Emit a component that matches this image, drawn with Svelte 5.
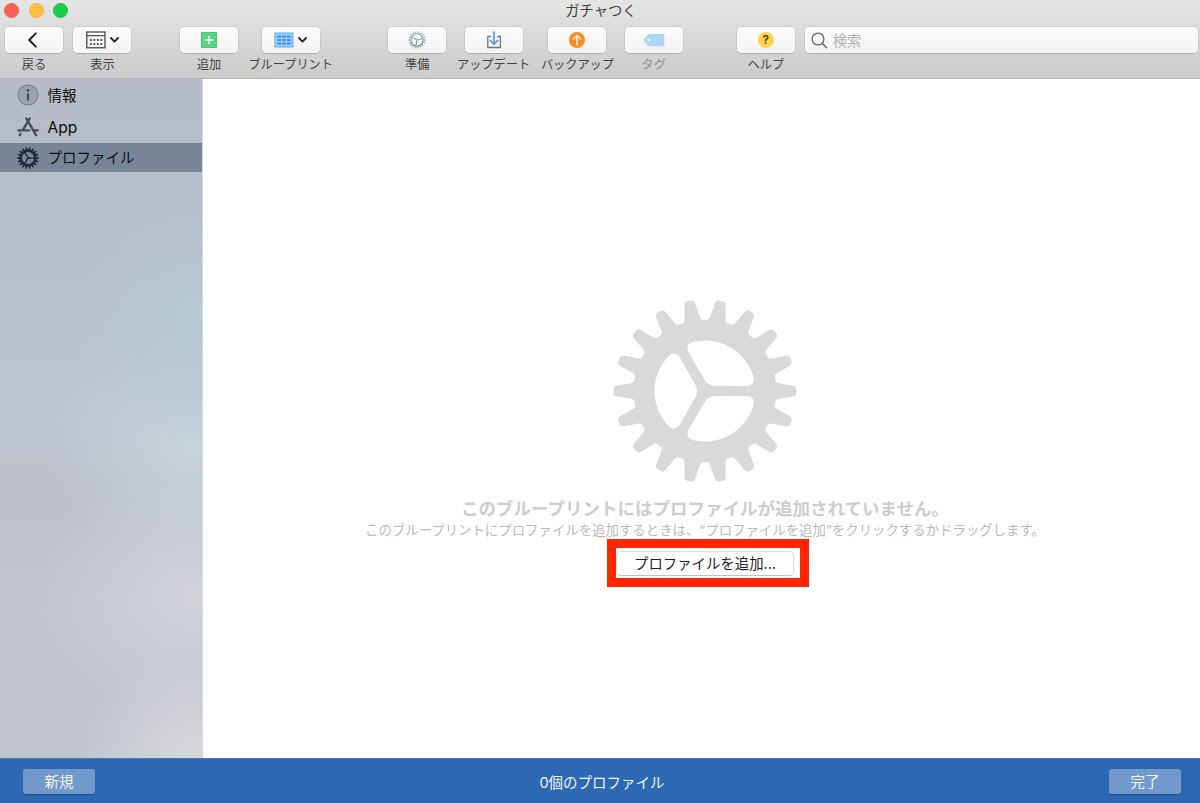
<script>
  const leftItems = [
    { icon: 'back', label: '戻る' },
    { icon: 'view', label: '表示' }
  ];
  const addItems = [
    { icon: 'add', label: '追加' },
    { icon: 'blueprint', label: 'ブループリント' }
  ];
  const deviceItems = [
    { icon: 'prepare', label: '準備' },
    { icon: 'update', label: 'アップデート' },
    { icon: 'backup', label: 'バックアップ' },
    { icon: 'tag', label: 'タグ', disabled: true }
  ];
  const helpItems = [{ icon: 'help', label: 'ヘルプ' }];

  const groups = [
    { name: 'nav', items: leftItems },
    { name: 'add', items: addItems },
    { name: 'device', items: deviceItems },
    { name: 'help', items: helpItems }
  ];

  const sections = [
    { id: 'info', label: '情報' },
    { id: 'app', label: 'App' },
    { id: 'profile', label: 'プロファイル' }
  ];

  let selected = $state('profile');

  const TEETH = 18;

  // returns a function that formats a point turned by a radians
  function turned(a) {
    return (x, y) =>
      `${(x * Math.cos(a) - y * Math.sin(a)).toFixed(2)} ${(x * Math.sin(a) + y * Math.cos(a)).toFixed(2)}`;
  }

  // one tooth lying on the x axis, repeated around the centre
  function gearOutline() {
    let d = '';
    for (let i = 0; i < TEETH; i++) {
      const p = turned((i * 2 * Math.PI) / TEETH);
      d += `${i === 0 ? 'M' : 'L'}${p(70.8, -9.4)}Q${p(71.5, -8.2)} ${p(75, -7.6)}L${p(87.6, -5.5)}`;
      d += `Q${p(91.3, -5)} ${p(91.5, -2)}L${p(91.5, 2)}Q${p(91.3, 5)} ${p(87.6, 5.5)}`;
      d += `L${p(75, 7.6)}Q${p(71.5, 8.2)} ${p(70.8, 9.4)}`;
    }
    return d + 'Z';
  }

  // the three openings between the spokes
  function gearHoles() {
    let d = '';
    for (let i = 0; i < 3; i++) {
      const p = turned(((60 + i * 120) * Math.PI) / 180);
      d += `M${p(25.3, -33.7)}L${p(9.8, -6.5)}Q${p(5.7, 0)} ${p(9.8, 6.5)}L${p(25.3, 33.7)}`;
      d += `Q${p(30.8, 41)} ${p(37, 34.3)}A50.4 50.4 0 0 0 ${p(37, -34.3)}Q${p(30.8, -41)} ${p(25.3, -33.7)}Z`;
    }
    return d;
  }

  const gear = gearOutline() + gearHoles();
  const ticks = Array.from({ length: 18 }, (_, i) => i * 20);
</script>

{#snippet chevron()}
  <svg class="chevron" width="9" height="6" viewBox="0 0 9 6">
    <path d="M1 1l3.5 3.6L8 1" fill="none" stroke="#222" stroke-width="1.8" stroke-linecap="round" stroke-linejoin="round" />
  </svg>
{/snippet}

{#snippet toolIcon(name)}
  {#if name === 'back'}
    <svg class="back" width="18" height="18" viewBox="0 0 18 18">
      <path d="M11.8 2.4L5.3 9l6.5 6.6" fill="none" stroke="#222" stroke-width="2" stroke-linecap="round" stroke-linejoin="round" />
    </svg>
  {:else if name === 'view'}
    <svg width="20" height="18" viewBox="0 0 20 18">
      <rect x="0.8" y="1" width="18.2" height="15.8" fill="none" stroke="#3c3c3c" stroke-width="1.2" />
      <path d="M1 4.7h18" stroke="#3c3c3c" stroke-width="1.1" />
      <path d="M3.9 9h12.4M3.9 13h12.4" stroke="#555" stroke-width="2" stroke-dasharray="1.9 1.6" />
    </svg>
    {@render chevron()}
  {:else if name === 'add'}
    <svg width="16" height="16" viewBox="0 0 16 16">
      <rect width="16" height="16" rx="0.6" fill="#56d480" />
      <rect x="0.5" y="0.5" width="15" height="15" fill="none" stroke="#4cc977" />
      <path d="M8 3.8v8.4M3.8 8h8.4" stroke="#fff" stroke-width="1.3" />
    </svg>
  {:else if name === 'blueprint'}
    <svg width="20" height="16" viewBox="0 0 20 16">
      <rect x="0.5" y="0.6" width="18.8" height="14.8" fill="#a3d0fc" />
      <rect x="1" y="1.1" width="17.8" height="13.8" fill="none" stroke="#5cacf9" />
      <path d="M3.2 4.6h13.6M3.2 8.1h13.6M3.2 11.6h13.6" stroke="#3f97f5" stroke-width="2.3" stroke-dasharray="3.9 0.95" />
    </svg>
    {@render chevron()}
  {:else if name === 'prepare'}
    <svg width="18" height="18" viewBox="-9 -9 18 18">
      <defs>
        <linearGradient id="steel" gradientUnits="userSpaceOnUse" x1="0" y1="-8" x2="0" y2="8">
          <stop offset="0" stop-color="#a4cdd8" />
          <stop offset="1" stop-color="#7d8388" />
        </linearGradient>
      </defs>
      <g fill="none" stroke="url(#steel)">
        <circle r="6.1" stroke-width="1.3" />
        {#each ticks as angle}
          <path d="M6.6 -0.01L8.5 0.01" transform="rotate({angle})" stroke-width="1.3" />
        {/each}
        <path d="M0 0L-5.4 -2.9M0 0L5.7 -1.4M0 0L-1.2 6" stroke-width="1.2" />
      </g>
    </svg>
  {:else if name === 'update'}
    <svg width="16" height="18" viewBox="0 0 16 18">
      <path d="M5 5.5H1.8v11h12.6v-11H11" fill="none" stroke="#757575" stroke-width="1.3" />
      <path d="M8 1v12.2M4.1 9.3L8 13.3l3.9-4" fill="none" stroke="#3f97f5" stroke-width="1.6" stroke-linecap="round" stroke-linejoin="round" />
    </svg>
  {:else if name === 'backup'}
    <svg width="16" height="16" viewBox="0 0 16 16">
      <circle cx="8" cy="8" r="8" fill="#fd8d1f" />
      <path d="M8 13V3.5M4.5 7L8 3.4 11.5 7" fill="none" stroke="#fff" stroke-width="1.3" stroke-linecap="round" stroke-linejoin="round" />
    </svg>
  {:else if name === 'tag'}
    <svg width="22" height="14" viewBox="0 0 22 14">
      <path fill-rule="evenodd" fill="#b0d4f8" d="M6 1h14.4q0.8 0 0.8 0.8v10.6q0 0.8-0.8 0.8H6Q5.3 13.2 4.7 12.4L1 8.1q-0.7-1 0-2L4.7 1.8Q5.3 1 6 1zM5.8 5.8a1.3 1.3 0 1 0 0 2.6a1.3 1.3 0 1 0 0-2.6z" />
    </svg>
  {:else if name === 'help'}
    <span class="help-mark">?</span>
  {/if}
{/snippet}

<div class="window">
  <header>
    <div class="titlebar">
      <div class="lights">
        <span class="light close"></span>
        <span class="light minimize"></span>
        <span class="light zoom"></span>
      </div>
      <div class="title">ガチャつく</div>
    </div>
    <div class="toolbar">
      {#each groups as group}
        <div class="group {group.name}">
          {#each group.items as item}
            <div class="tool" class:disabled={item.disabled}>
              <button class="tool-button" aria-label={item.label} disabled={item.disabled}>
                {@render toolIcon(item.icon)}
              </button>
              <span class="tool-label">{item.label}</span>
            </div>
          {/each}
        </div>
      {/each}
      <label class="search">
        <svg width="17" height="17" viewBox="0 0 17 17">
          <circle cx="7" cy="7" r="5.9" fill="none" stroke="#666" stroke-width="1.3" />
          <path d="M11.2 11.2l4.4 4.5" stroke="#666" stroke-width="1.5" stroke-linecap="round" />
        </svg>
        <input type="text" placeholder="検索" />
      </label>
    </div>
  </header>

  <div class="body">
    <nav>
      {#each sections as section}
        <button class="row" class:selected={selected === section.id} onclick={() => (selected = section.id)}>
          {#if section.id === 'info'}
            <svg width="22" height="22" viewBox="0 0 22 22">
              <circle cx="11" cy="11" r="10.1" fill="#9ca3ae" stroke="#727983" stroke-width="1" />
              <circle cx="11" cy="6.4" r="1.4" fill="#454b55" />
              <path d="M11 9.3v7.2" stroke="#454b55" stroke-width="2.2" />
            </svg>
          {:else if section.id === 'app'}
            <svg width="22" height="22" viewBox="0 0 22 22">
              <g fill="none" stroke="#454b57" stroke-width="2.3" stroke-linecap="round">
                <path d="M12.8 2.4L6.2 13.4M3.6 17.7L2.7 19.2M9.2 2.4l9.9 16.8" />
                <path d="M1.3 14.4h11M17 14.4h3.8" />
              </g>
            </svg>
          {:else}
            <svg width="22" height="22" viewBox="-92 -92 184 184">
              <path d={gear} fill="#1d2b3d" fill-rule="evenodd" />
            </svg>
          {/if}
          <span>{section.label}</span>
        </button>
      {/each}
    </nav>

    <main>
      <svg class="big-gear" width="184" height="184" viewBox="-92 -92 184 184">
        <path d={gear} fill="#d9d9d9" fill-rule="evenodd" />
      </svg>
      <h1>このブループリントにはプロファイルが追加されていません。</h1>
      <p>このブループリントにプロファイルを追加するときは、“プロファイルを追加”をクリックするかドラッグします。</p>
      <div class="add-profile">
        <button>プロファイルを追加...</button>
        <span class="highlight"></span>
      </div>
    </main>
  </div>

  <footer>
    <button>新規</button>
    <span>0個のプロファイル</span>
    <button>完了</button>
  </footer>
</div>

<style>
  :global(body) {
    margin: 0;
  }

  .window {
    width: 1200px;
    height: 803px;
    display: flex;
    flex-direction: column;
    overflow: hidden;
    font-family: Inter, 'Noto Sans CJK JP', sans-serif;
    color: #222;
  }

  button {
    font-family: inherit;
    padding: 0;
    margin: 0;
    border: none;
  }

  svg {
    display: block;
    flex: none;
  }

  header {
    box-sizing: border-box;
    height: 79px;
    flex: none;
    background: linear-gradient(#e5e5e5, #cbcbcb);
    border-bottom: 1px solid #b3b3b3;
  }

  .titlebar {
    display: grid;
    grid-template-columns: 100px 1fr 98px;
    height: 20px;
    align-items: center;
  }

  .lights {
    display: flex;
    gap: 9.4px;
    padding: 0 0 1px 4.4px;
  }

  .light {
    box-sizing: border-box;
    width: 15px;
    height: 15px;
    border-radius: 50%;
  }

  .close {
    background: #fe5f57;
    border: 1px solid #f25952;
  }

  .minimize {
    background: #febe3f;
    border: 1px solid #f0b33c;
  }

  .zoom {
    background: #1bcb4c;
    border: 1px solid #18bf46;
  }

  .title {
    padding-top: 1px;
    text-align: center;
    font-size: 14.3px;
    line-height: 20px;
    color: #404040;
  }

  .toolbar {
    display: flex;
    align-items: flex-start;
    padding: 7px 2px 0 5px;
  }

  .group {
    display: flex;
    gap: 10.4px;
  }

  .group.nav {
    margin-right: 48.6px;
  }

  .group.add {
    margin-right: 55.2px;
  }

  .group.device {
    gap: 10.8px;
    margin-right: 54px;
  }

  .group.help {
    margin-right: 10px;
  }

  .tool {
    min-width: 58px;
    display: flex;
    flex-direction: column;
    align-items: center;
  }

  .tool-button {
    width: 58px;
    height: 26px;
    display: flex;
    align-items: center;
    justify-content: center;
    gap: 4px;
    border-radius: 4.5px;
    background: linear-gradient(#fcfcfc, #f3f3f3);
    box-shadow: 0 0 0 0.5px rgba(0, 0, 0, 0.1), 0 1px 1px rgba(0, 0, 0, 0.14);
  }

  .back {
    margin-right: 3px;
  }

  .tool-label {
    font-size: 12.2px;
    line-height: 16px;
    margin-top: 4px;
    white-space: nowrap;
    color: #444;
  }

  .disabled .tool-label {
    color: #929292;
  }

  .help-mark {
    width: 16px;
    height: 16px;
    border-radius: 50%;
    background: #fed44e;
    color: #3c3520;
    font-size: 12px;
    font-weight: 600;
    line-height: 16px;
    text-align: center;
  }

  .search {
    flex: 1;
    height: 26px;
    display: flex;
    align-items: center;
    gap: 5px;
    padding-left: 6px;
    border-radius: 4.5px;
    background: linear-gradient(#fcfcfc, #f3f3f3);
    box-shadow: 0 0 0 0.5px rgba(0, 0, 0, 0.1), 0 1px 1px rgba(0, 0, 0, 0.14);
  }

  .search input {
    flex: 1;
    height: 24px;
    padding: 0;
    border: none;
    outline: none;
    background: none;
    font-family: inherit;
    font-size: 14.3px;
  }

  .search input::placeholder {
    color: #b0b0b0;
  }

  .body {
    flex: 1;
    display: flex;
    min-height: 0;
  }

  nav {
    box-sizing: border-box;
    width: 203px;
    flex: none;
    border-right: 1px solid #d9dadc;
    background:
      radial-gradient(ellipse 130px 130px at 96% 35%, rgba(182, 201, 209, 0.95), rgba(182, 201, 209, 0)),
      radial-gradient(ellipse 150px 110px at 96% 54%, rgba(199, 211, 219, 1), rgba(199, 211, 219, 0)),
      radial-gradient(ellipse 160px 130px at 96% 76%, rgba(209, 211, 217, 1), rgba(209, 211, 217, 0)),
      radial-gradient(ellipse 120px 110px at 96% 100%, rgba(216, 216, 219, 1), rgba(216, 216, 219, 0)),
      linear-gradient(#b6bdc9, #b7bdca 25%, #bdc4d0 48%, #bcc0cb 60%, #c2c5cf 78%, #c0c4ce);
  }

  .row {
    width: 100%;
    height: 32px;
    display: flex;
    align-items: center;
    gap: 8.5px;
    padding-left: 17px;
    background: none;
    font-size: 14.5px;
    line-height: 20px;
    color: #0c0e12;
  }

  .row span {
    padding-top: 1px;
  }

  .row:nth-child(2) span {
    font-size: 15.5px;
  }

  .row.selected {
    height: 29px;
    background: #788597;
  }

  main {
    flex: 1;
    display: flex;
    flex-direction: column;
    align-items: center;
    padding: 220px 0 0 7px;
    background: #fff;
  }

  h1 {
    margin: 14px 0 0;
    font-size: 17.5px;
    font-weight: 700;
    line-height: 24px;
    color: #cdcdcd;
    white-space: nowrap;
  }

  p {
    margin: -1px 0 0;
    font-size: 13.42px;
    line-height: 20px;
    color: #bbb;
    white-space: nowrap;
  }

  .add-profile {
    position: relative;
    margin-top: 11px;
  }

  .add-profile button {
    display: block;
    box-sizing: border-box;
    width: 178px;
    height: 25px;
    border: 1px solid #dcdcdc;
    border-bottom-color: #c2c2c2;
    border-radius: 4.5px;
    background: #fff;
    font-size: 14.4px;
    line-height: 22px;
    color: #222;
  }

  .highlight {
    position: absolute;
    inset: -12px -14.5px -11px -9.5px;
    border: 9px solid #ff2600;
    pointer-events: none;
  }

  footer {
    box-sizing: border-box;
    height: 45px;
    flex: none;
    display: flex;
    align-items: center;
    justify-content: space-between;
    padding: 1px 19px 0 23px;
    background: #2d69b2;
    border-top: 1px solid #4a7cb9;
    font-size: 14.5px;
    color: #f2f6fb;
  }

  footer button {
    width: 72px;
    height: 25px;
    border-radius: 3px;
    background: #7299cb;
    box-shadow: 0 1px 1px rgba(0, 0, 0, 0.25);
    font-size: 14.5px;
    line-height: 24px;
    color: #f2f6fb;
  }
</style>
